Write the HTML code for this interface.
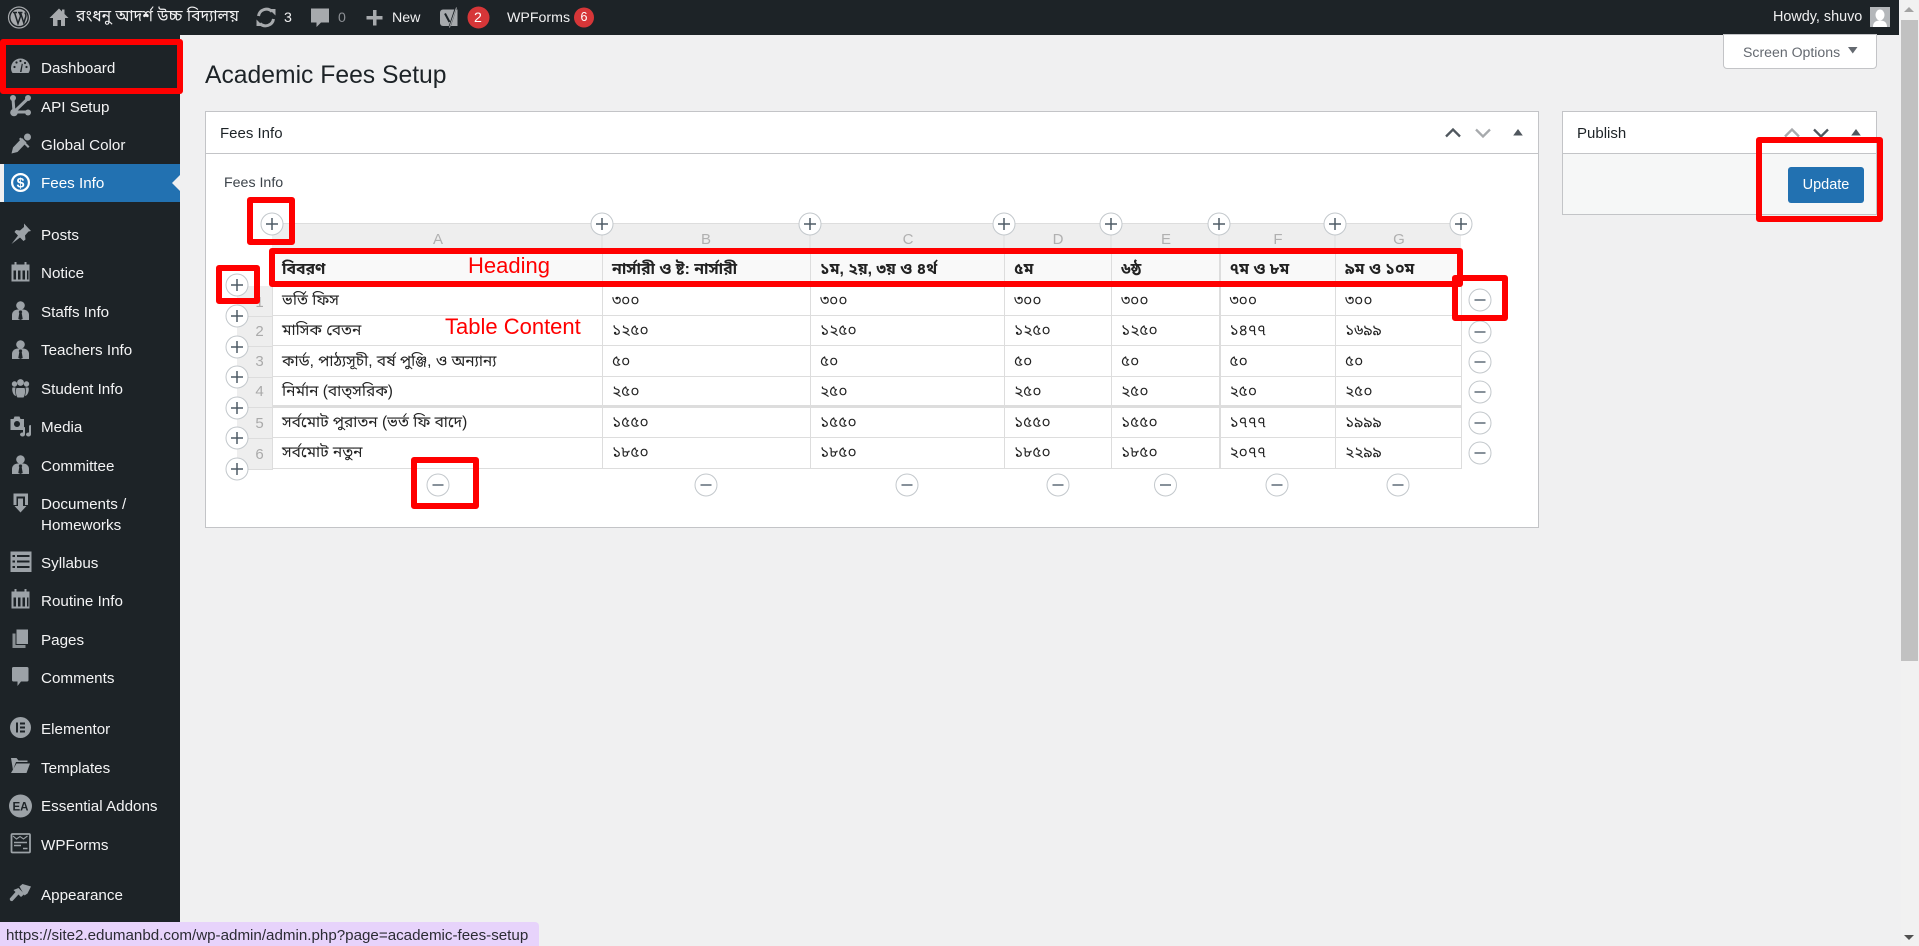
<!DOCTYPE html>
<html lang="en">
<head>
<meta charset="utf-8">
<title>Academic Fees Setup</title>
<style>
html,body{margin:0;padding:0;width:1919px;height:946px;overflow:hidden;background:#f0f0f1}
body{font-family:"Liberation Sans","Noto Sans Bengali","Lohit Bengali","FreeSans",sans-serif;position:relative;color:#1d2327}
.a{position:absolute;white-space:nowrap;line-height:20px}
#bar{position:absolute;left:0;top:0;width:1899px;height:35px;background:#1d2327}
#side{position:absolute;left:0;top:35px;width:180px;height:911px;background:#1d2327}
#act{position:absolute;left:0;top:164px;width:180px;height:38px;background:#2271b1}
#act i{position:absolute;left:0;top:0;width:4px;height:38px;background:#f0f0f1}
#act b{position:absolute;right:0;top:11px;border:8px solid transparent;border-right-color:#f0f0f1;border-left:0}
.m{color:#f4f4f5;font-size:15.2px;left:41px}
.t{color:#f0f0f1;font-size:14.2px}
.box{position:absolute;background:#fff;border:1px solid #c3c4c7;box-sizing:border-box}
.red{position:absolute;border:6px solid #f00;border-radius:3px;box-sizing:border-box}
.note{position:absolute;color:#f00;font-size:22px;line-height:26px;white-space:nowrap}
svg{position:absolute;left:0;top:0}
#tb{position:absolute;left:272px;top:253px;border-collapse:collapse;table-layout:fixed;width:1189px;font-size:15.500px;line-height:20px;color:#222}
#tb td,#tb th{border:1px solid #ddd;padding:0 0 0 9px;text-align:left;white-space:nowrap;overflow:hidden;vertical-align:middle}
#tb th{background:#f9f9f9;font-weight:bold;font-size:15.800px;height:31px}
#tb tr.low td{padding-top:2px}
#tb tr.thick td{border-bottom:3px solid #ddd}
#tb td.e,#tb th.e{border-right:2px solid #ddd}
.l{color:#b0b0b0;font-size:15px;width:30px;text-align:center}
.n{color:#aaa;font-size:15px;left:252px;width:15px;text-align:center}
#status{position:absolute;left:0;top:922px;width:539px;height:24px;background:#e7d3fb;border-top-right-radius:4px;font-size:15.150px;line-height:27px;color:#2b2b33;padding-left:6px;box-sizing:border-box;white-space:nowrap}
</style>
</head>
<body>
<div id="bar"></div>
<div id="side"></div>
<div id="act"><i></i><b></b></div>

<!-- scrollbar -->
<div style="position:absolute;left:1901px;top:0;width:18px;height:946px;background:#f1f1f1"></div>
<div style="position:absolute;left:1901px;top:20px;width:17px;height:641px;background:#c1c1c1"></div>

<svg width="1919" height="946" viewBox="0 0 1919 946">
<!-- scroll arrows -->
<path d="M1909 7l5 5h-10z" fill="#a3a3a3"/><path d="M1904 935h10l-5 5z" fill="#505050"/>
<!-- admin bar icons -->
<g fill="#a7aaad">
<circle cx="19" cy="17.5" r="10.5" fill="none" stroke="#a7aaad" stroke-width="1.2"/>
<circle cx="19" cy="17.5" r="8.5"/>
<path d="M13 12.5h4M14.5 12.5l3.5 11 2.6-7.5-1.3-3.5M18 12.5h4.5M20.5 12.5l3.3 10.5 2-6.5c.5-1.800-.4-3-1-4" fill="none" stroke="#1d2327" stroke-width="1.5"/>
<path d="M59 8.500L49.500 18H53v8h4.500v-6h3.500v6H65v-8h3.500L64.500 14V9.500h-2.500v2z"/>
<path d="M258.500 16a8 8 0 0 1 13.500-4.500M273.500 19a8 8 0 0 1-13.500 4.500" fill="none" stroke="#a7aaad" stroke-width="3"/>
<path d="M269 9h6.500v6.500zM263 26h-6.500v-6.500z"/>
<path d="M311 8.500h18v14h-8l-4.500 4.500v-4.500H311z"/>
<path d="M373 10h3.500v6h6v3.500h-6v6H373v-6h-6.500V16h6.500z"/>
<path d="M443 9.500h14.500v16.500H443a3 3 0 0 1-3-3V12.500a3 3 0 0 1 3-3z"/>
<path d="M445 13.500l4.500 8.500M455.500 9l-6 18-3 1.500" fill="none" stroke="#1d2327" stroke-width="2"/>
<path d="M456.500 7.500l-7 20" fill="none" stroke="#a7aaad" stroke-width="1"/>
</g>
<circle cx="478.500" cy="17.500" r="11" fill="#d63638"/>
<circle cx="584" cy="17.500" r="10" fill="#d63638"/>
<rect x="1870" y="7" width="20" height="20" fill="#b4b7ba"/>
<path d="M1880 9.500a4.500 5.500 0 0 1 0 11a4.500 5.500 0 0 1 0-11zM1873 27c0-5 3-6.500 7-6.500s7 1.500 7 6.500z" fill="#fff"/>
<!-- sidebar icons -->
<g fill="#9ca2a7">
<path d="M11 68a9.500 9.500 0 0 1 19 0c0 2-.5 3.500-1.500 5h-16c-1-1.500-1.500-3-1.500-5z"/>
<path d="M20 72l1.800-8.500 1 .5L21.500 72z" fill="#1d2327"/>
<circle cx="14.500" cy="67" r="1.100" fill="#1d2327"/><circle cx="16.500" cy="62.500" r="1.100" fill="#1d2327"/><circle cx="20.500" cy="61" r="1.100" fill="#1d2327"/><circle cx="26.500" cy="67" r="1.100" fill="#1d2327"/><circle cx="25" cy="63" r="1.100" fill="#1d2327"/>
<path d="M13 98.500l1 13.500 14-13.500M14 112h14" fill="none" stroke="#9ca2a7" stroke-width="3"/>
<circle cx="13" cy="98" r="3"/><circle cx="28" cy="98" r="3"/><circle cx="14" cy="112.500" r="3.800"/><circle cx="28" cy="112.500" r="3"/>
<path d="M11.500 153.500l1.500-6 9-9.500 4.500 4.500-9 9.500z"/>
<path d="M20.500 137.500l9 9-1.500 1.500-9-9z"/><circle cx="27.500" cy="137" r="3.500"/><path d="M24 136.500l3 3.500 2-1-3-4z"/>
<path d="M24 223.500l7 7.500-2.500.5-3.500 4 .5 4-2 1.500-3.500-3.500-8.500 6.500 6.500-8.500-3.500-3.500 1.500-2 4 .5 4-3.500z"/>
<g id="cal"><path d="M11.500 264.500h3v-2.500h2v2.500h8v-2.500h2v2.500h3v17h-18zM13.500 270.500v9h2.500v-9zM18 270.500v9h2.500v-9zM22.500 270.500v9h2.500v-9zM27 270.500v9h1.500v-9z" fill-rule="evenodd"/></g>
<use href="#cal" y="327"/>
<g id="per"><circle cx="20.500" cy="305.500" r="4.300"/><path d="M12 320v-5c0-3 2-5 5.500-5.500h6c3.500.5 5.500 2.500 5.500 5.500v5z"/><path d="M19.500 310.500h2l.8 1.500-.6 1 1 6-2.200 1-2.200-1 1-6-.6-1z" fill="#1d2327"/></g>
<use href="#per" y="39"/><use href="#per" y="154"/>
<circle cx="20.500" cy="382.500" r="3.400"/><circle cx="14.500" cy="384" r="2.700"/><circle cx="26.500" cy="384" r="2.700"/>
<path d="M16.500 388h8c1 2 .8 7-1 9.500h-6c-1.800-2.500-2-7.500-1-9.500zM12.500 387.500h3c-.6 3-.3 5.500.5 8.500-3-.5-4.500-6-3.500-8.500zM25.500 387.500h3c1 2.500-.5 8-3.500 8.500.8-3 1.100-5.500.5-8.500z"/>
<path d="M10.500 419h3l1-2.500h5l1 2.500h3.500v11h-13.500zM17 421a3 3 0 1 0 .01 0z" fill-rule="evenodd"/>
<path d="M29 425.500l2-.5v9.500a2.500 2 0 1 1-2-2zM23 427.500l2-.5v7.500a2.500 2 0 1 1-2-2z"/>
<path d="M13.500 493.500h14.500v11.500h-3v-8.500h-8.500v8.500h-3z"/><path d="M18 498.500h5v7.500h3.500l-6 6.500-6-6.500H18z"/>
<path d="M10.500 551.500h21v20.500h-21zM12.500 555v2h2.500v-2zM17 555v2h12.500v-2zM12.500 560.500v2h2.500v-2zM17 560.500v2h12.500v-2zM12.500 566v2h2.500v-2zM17 566v2h12.500v-2z" fill-rule="evenodd"/>
<path d="M12.500 633.500h3v11.500h10v3h-13z" opacity=".85"/><path d="M16.500 629.500h11.500v14.500h-11.500z"/>
<path d="M13.500 667h13.500a1.500 1.500 0 0 1 1.500 1.500v11.500a1.500 1.500 0 0 1-1.500 1.500h-6l-3.500 4.500v-4.500h-4a1.500 1.500 0 0 1-1.500-1.500v-11.500a1.500 1.500 0 0 1 1.500-1.500z"/>
<circle cx="20.500" cy="727.500" r="10.500"/>
<path d="M16 722.500h2v10h-2zM20 722.500h5v2h-5zM20 726.500h5v2h-5zM20 730.500h5v2h-5z" fill="#1d2327"/>
<path d="M11 758h5.500l2 2.500h9v1.500h-11.500l-3 8z"/><path d="M16.500 763.500h13.500l-3.500 9.500h-15.500z"/>
<circle cx="20.500" cy="806" r="11.500"/>
</g>
<circle cx="20.500" cy="182.500" r="8.400" fill="none" stroke="#fff" stroke-width="2.200"/>
<text x="20.500" y="187.500" text-anchor="middle" font-family="Liberation Sans" font-size="14" font-weight="bold" fill="#fff">$</text>
<text x="20.500" y="810.500" text-anchor="middle" font-family="Liberation Sans" font-size="11.500" font-weight="bold" fill="#1d2327">EA</text>
<g fill="none" stroke="#9ca2a7">
<rect x="11.500" y="834" width="18.500" height="18.500" rx="1" stroke-width="1.800"/>
<path d="M13 836l3.500 3 3.500-2.500 3.500 2.500 4-3" stroke-width="1.100"/>
<path d="M14 842.500h13M14 845.500h7M23 848.500h4.500" stroke-width="1.500"/>
</g>
<g fill="#9ca2a7">
<path d="M19.500 886.500l3-2.500 8.500 2.500-3.500 7-3 2z"/><path d="M18.500 888l6 6-3.500 3-2.500-2.500-6 6.500c-1.500.5-3-.5-2.700-2.500l5.700-6.500-2-2z"/>
</g>
</svg>

<!-- sidebar text -->
<span class="a m" style="top:59px">Dashboard</span>
<span class="a m" style="top:98px">API Setup</span>
<span class="a m" style="top:136px">Global Color</span>
<span class="a m" style="top:174px;color:#fff">Fees Info</span>
<span class="a m" style="top:226px">Posts</span>
<span class="a m" style="top:264px">Notice</span>
<span class="a m" style="top:303px">Staffs Info</span>
<span class="a m" style="top:341px">Teachers Info</span>
<span class="a m" style="top:380px">Student Info</span>
<span class="a m" style="top:418px">Media</span>
<span class="a m" style="top:457px">Committee</span>
<span class="a m" style="top:495px">Documents /</span>
<span class="a m" style="top:516px">Homeworks</span>
<span class="a m" style="top:554px">Syllabus</span>
<span class="a m" style="top:592px">Routine Info</span>
<span class="a m" style="top:631px">Pages</span>
<span class="a m" style="top:669px">Comments</span>
<span class="a m" style="top:720px">Elementor</span>
<span class="a m" style="top:759px">Templates</span>
<span class="a m" style="top:797px">Essential Addons</span>
<span class="a m" style="top:836px">WPForms</span>
<span class="a m" style="top:886px">Appearance</span>

<!-- admin bar text -->
<span class="a t" style="left:76px;top:7px;font-size:15.700px">রংধনু আদর্শ উচ্চ বিদ্যালয়</span>
<span class="a t" style="left:284px;top:8px">3</span>
<span class="a t" style="left:338px;top:8px;color:#8c8f94">0</span>
<span class="a t" style="left:392px;top:8px">New</span>
<span class="a t" style="left:474px;top:8px;color:#fff">2</span>
<span class="a t" style="left:507px;top:8px">WPForms</span>
<span class="a" style="left:580.500px;top:7px;color:#fff;font-size:12.500px">6</span>
<span class="a t" style="left:1773px;top:7px;font-size:14.400px">Howdy, shuvo</span>

<!-- screen options -->
<div style="position:absolute;left:1723px;top:34px;width:154px;height:35px;background:#fff;border:1px solid #c3c4c7;border-radius:0 0 4px 4px;box-sizing:border-box"></div>
<span class="a" style="left:1743px;top:42px;font-size:14.100px;color:#646970">Screen Options</span>

<!-- title -->
<span class="a" style="left:205px;top:61px;font-size:24.700px;line-height:30px;color:#1d2327">Academic Fees Setup</span>

<!-- Fees panel -->
<div class="box" style="left:205px;top:111px;width:1334px;height:417px"></div>
<div style="position:absolute;left:206px;top:153px;width:1332px;height:1px;background:#c3c4c7"></div>
<span class="a" style="left:220px;top:124px;font-size:15px;color:#1d2327">Fees Info</span>
<span class="a" style="left:224px;top:173px;font-size:14.200px;color:#3c434a">Fees Info</span>

<!-- Publish panel -->
<div class="box" style="left:1562px;top:111px;width:315px;height:104px;background:#f6f7f7"></div>
<div style="position:absolute;left:1563px;top:112px;width:313px;height:41px;background:#fff;border-bottom:1px solid #c3c4c7"></div>
<span class="a" style="left:1577px;top:124px;font-size:15px;color:#1d2327">Publish</span>
<div style="position:absolute;left:1788px;top:167px;width:76px;height:36px;background:#2271b1;border-radius:3px;color:#fff;font-size:14.500px;line-height:37px;text-align:center">Update</div>

<!-- sheet header background -->
<div style="position:absolute;left:272px;top:223px;width:1189px;height:30px;background:#eee;border-top:1px solid #ddd;box-sizing:border-box"></div>
<div style="position:absolute;left:237px;top:286px;width:36px;height:184px;background:#eee;border-bottom:1px solid #ddd;box-sizing:border-box"></div>
<svg width="1919" height="946" viewBox="0 0 1919 946">
<path d="M602 223v30M810 223v30M1004 223v30M1111 223v30M1219 223v30M1335 223v30" stroke="#ddd" stroke-width="1"/>
<path d="M237 316.500h36M237 346.500h36M237 377.500h36M237 407.500h36M237 438.500h36" stroke="#ddd"/>
</svg>
<span class="a l" style="left:423px;top:230px">A</span>
<span class="a l" style="left:691px;top:230px">B</span>
<span class="a l" style="left:893px;top:230px">C</span>
<span class="a l" style="left:1043px;top:230px">D</span>
<span class="a l" style="left:1151px;top:230px">E</span>
<span class="a l" style="left:1263px;top:230px">F</span>
<span class="a l" style="left:1384px;top:230px">G</span>
<span class="a n" style="top:293px">1</span>
<span class="a n" style="top:322px">2</span>
<span class="a n" style="top:352px">3</span>
<span class="a n" style="top:382px">4</span>
<span class="a n" style="top:414px">5</span>
<span class="a n" style="top:445px">6</span>

<table id="tb">
<colgroup><col style="width:330px"><col style="width:208px"><col style="width:194px"><col style="width:107px"><col style="width:108px"><col style="width:116px"><col style="width:126px"></colgroup>
<tr style="height:32px"><th>বিবরণ</th><th>নার্সারী ও ষ্ট: নার্সারী</th><th>১ম, ২য়, ৩য় ও ৪র্থ</th><th>৫ম</th><th class="e">৬ষ্ঠ</th><th>৭ম ও ৮ম</th><th>৯ম ও ১০ম</th></tr>
<tr style="height:30px"><td>ভর্তি ফিস</td><td>৩০০</td><td>৩০০</td><td>৩০০</td><td class="e">৩০০</td><td>৩০০</td><td>৩০০</td></tr>
<tr style="height:30px"><td>মাসিক বেতন</td><td>১২৫০</td><td>১২৫০</td><td>১২৫০</td><td class="e">১২৫০</td><td>১৪৭৭</td><td>১৬৯৯</td></tr>
<tr class="low" style="height:31px"><td>কার্ড, পাঠ্যসূচী, বর্ষ পুঞ্জি, ও অন্যান্য</td><td>৫০</td><td>৫০</td><td>৫০</td><td class="e">৫০</td><td>৫০</td><td>৫০</td></tr>
<tr class="thick low" style="height:30px"><td>নির্মান (বাত্সরিক)</td><td>২৫০</td><td>২৫০</td><td>২৫০</td><td class="e">২৫০</td><td>২৫০</td><td>২৫০</td></tr>
<tr style="height:31px"><td>সর্বমোট পুরাতন (ভর্ত ফি বাদে)</td><td>১৫৫০</td><td>১৫৫০</td><td>১৫৫০</td><td class="e">১৫৫০</td><td>১৭৭৭</td><td>১৯৯৯</td></tr>
<tr style="height:31px"><td>সর্বমোট নতুন</td><td>১৮৫০</td><td>১৮৫০</td><td>১৮৫০</td><td class="e">১৮৫০</td><td>২০৭৭</td><td>২২৯৯</td></tr>
</table>

<svg width="1919" height="946" viewBox="0 0 1919 946">
<defs>
<g id="p"><circle r="11" fill="#fff" stroke="#c3c8cc"/><path d="M-6 0h12M0-6v12" stroke="#4e5b66" stroke-width="1.500"/></g>
<g id="q"><circle r="11" fill="#fff" stroke="#c3c8cc"/><path d="M-5.500 0h11" stroke="#87919a" stroke-width="2"/></g>
</defs>
<!-- top plus -->
<use href="#p" x="272" y="224"/><use href="#p" x="602" y="224"/><use href="#p" x="810" y="224"/><use href="#p" x="1004" y="224"/><use href="#p" x="1111" y="224"/><use href="#p" x="1219" y="224"/><use href="#p" x="1335" y="224"/><use href="#p" x="1461" y="224"/>
<!-- row plus -->
<use href="#p" x="237" y="285"/><use href="#p" x="237" y="316"/><use href="#p" x="237" y="347"/><use href="#p" x="237" y="377"/><use href="#p" x="237" y="408"/><use href="#p" x="237" y="438"/><use href="#p" x="237" y="469"/>
<!-- row minus -->
<use href="#q" x="1480" y="300"/><use href="#q" x="1480" y="332"/><use href="#q" x="1480" y="362"/><use href="#q" x="1480" y="392"/><use href="#q" x="1480" y="423"/><use href="#q" x="1480" y="453"/>
<!-- col minus -->
<use href="#q" x="438" y="485"/><use href="#q" x="706" y="485"/><use href="#q" x="907" y="485"/><use href="#q" x="1058" y="485"/><use href="#q" x="1165.500" y="485"/><use href="#q" x="1277" y="485"/><use href="#q" x="1398" y="485"/>
<!-- chevrons -->
<g fill="none" stroke-width="2.300">
<path d="M1446 136.500l7-7 7 7" stroke="#50575e"/>
<path d="M1476 129.500l7 7 7-7" stroke="#a7aaad"/>
<path d="M1785 136.500l7-7 7 7" stroke="#a7aaad"/>
<path d="M1814 129.500l7 7 7-7" stroke="#50575e"/>
</g>
<path d="M1518 129l4.800 6.500h-9.600zM1856 129l4.800 6.500h-9.600z" fill="#50575e"/>
<path d="M1848 47h9.500l-4.750 6.500z" fill="#646970"/>
</svg>

<!-- annotations -->
<span class="note" style="left:468px;top:253px">Heading</span>
<span class="note" style="left:445px;top:314px">Table Content</span>
<div class="red" style="left:0;top:39px;width:183px;height:55px"></div>
<div class="red" style="left:247px;top:197px;width:48px;height:48px"></div>
<div class="red" style="left:269px;top:248px;width:1194px;height:39px"></div>
<div class="red" style="left:216px;top:265px;width:44px;height:39px"></div>
<div class="red" style="left:1452px;top:275px;width:56px;height:46px"></div>
<div class="red" style="left:411px;top:457px;width:68px;height:52px"></div>
<div class="red" style="left:1756px;top:137px;width:127px;height:85px"></div>

<div id="status">https://site2.edumanbd.com/wp-admin/admin.php?page=academic-fees-setup</div>
</body>
</html>
